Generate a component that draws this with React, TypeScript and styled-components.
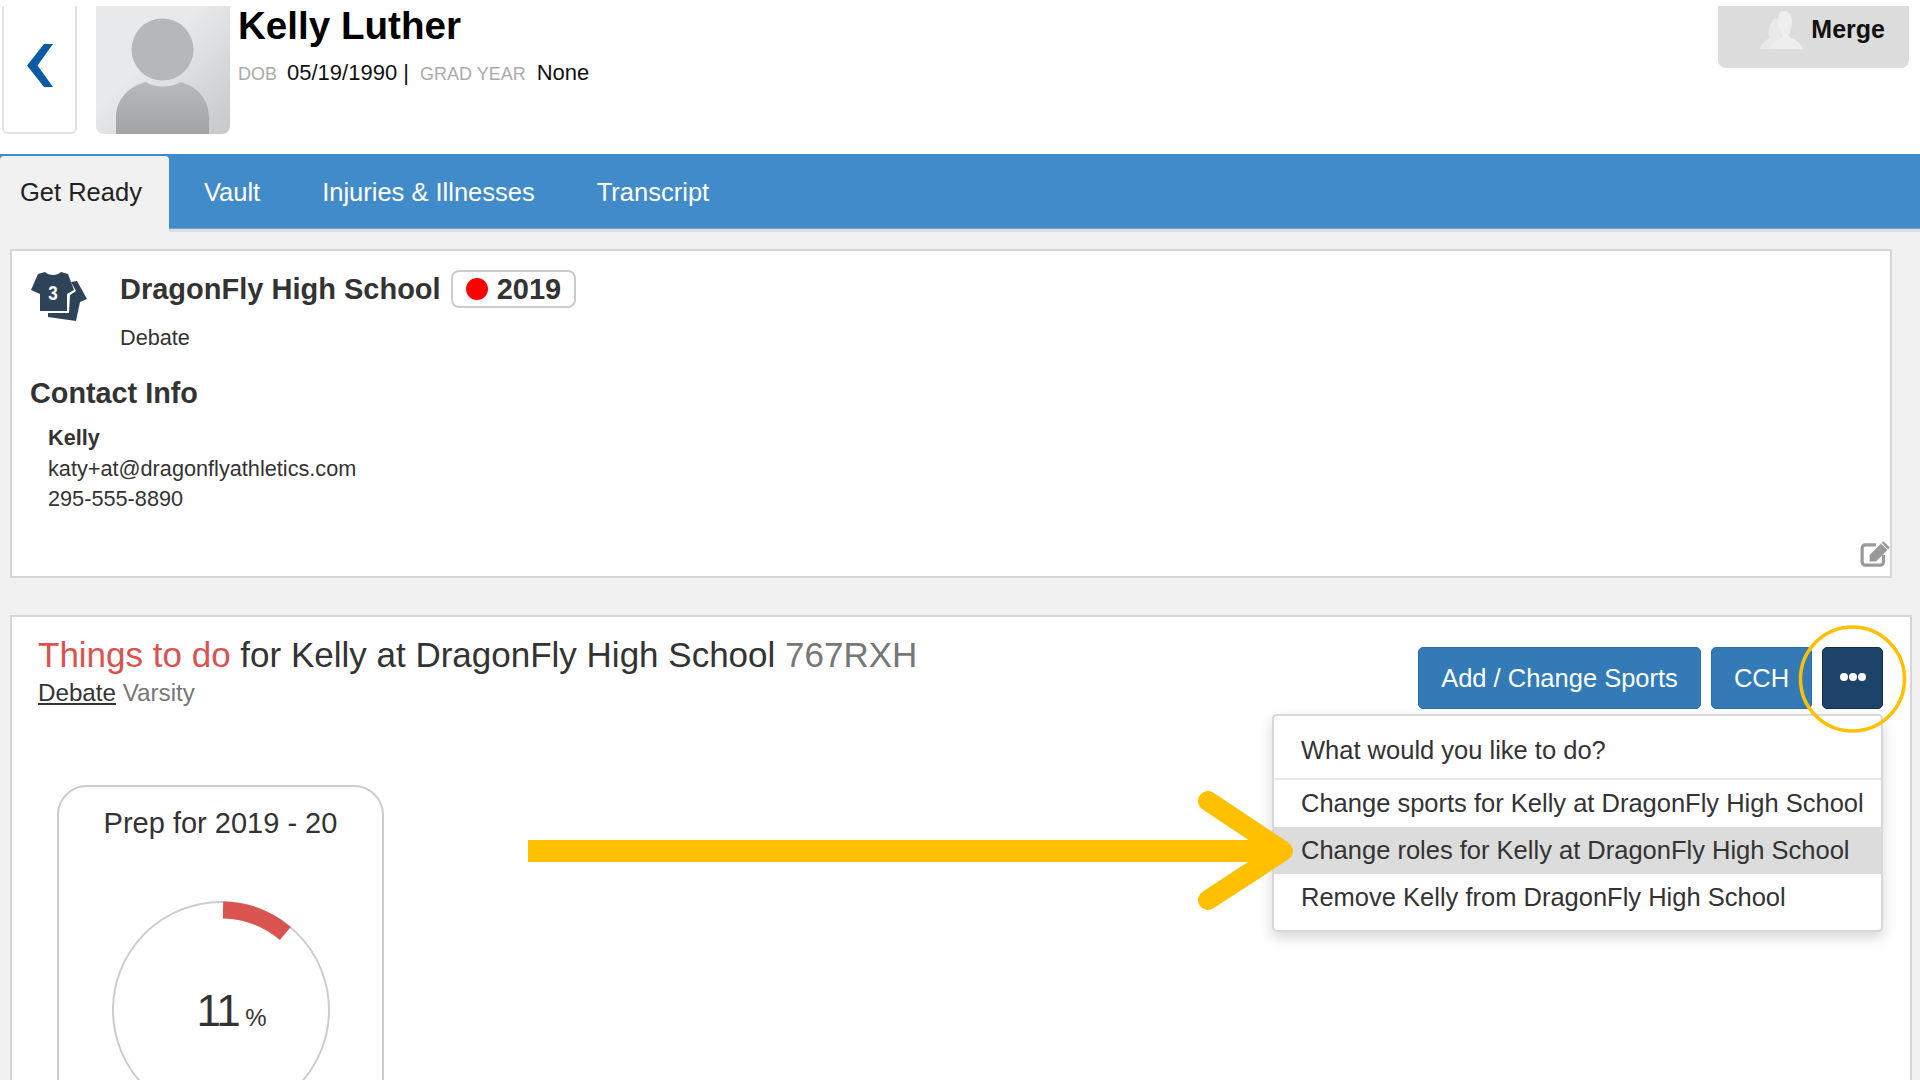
import React from 'react';
import styled, { createGlobalStyle } from 'styled-components';

const GlobalStyle = createGlobalStyle`
  html, body {
    margin: 0;
    padding: 0;
    height: 1080px;
    overflow: hidden;
    background: #f1f1f1;
    font-family: "Liberation Sans", Arial, sans-serif;
    color: #333;
  }
`;

const Page = styled.div`
  position: relative;
  width: 1920px;
  height: 1080px;
  overflow: hidden;
`;

const Header = styled.header`
  display: flex;
  height: 154px;
  padding-top: 6px;
  box-sizing: border-box;
  background: #fff;
`;

const BackButton = styled.button`
  width: 75px;
  height: 128px;
  margin-left: 2px;
  padding: 0 0 7px;
  display: flex;
  align-items: center;
  justify-content: center;
  background: #fff;
  border: 2px solid #e2e2e2;
  border-top: none;
  border-radius: 0 0 6px 6px;
`;

const Avatar = styled.div`
  width: 134px;
  height: 128px;
  margin-left: 19px;
  border-radius: 0 0 8px 8px;
  overflow: hidden;
  background: linear-gradient(135deg, #e8e9ea 40%, #c6c7c9 100%);
`;

const Identity = styled.div`
  margin-left: 8px;
  flex: 1;
`;

const Name = styled.h1`
  margin: -2px 0 0;
  font-size: 38.6px;
  line-height: 44px;
  font-weight: 700;
  color: #000;
`;

const Meta = styled.div`
  display: flex;
  align-items: baseline;
  margin-top: 12px;
  font-size: 22px;
  line-height: 26px;
  color: #111;
`;

const MetaLabel = styled.span<{ $gap: number }>`
  margin-right: ${({ $gap }) => $gap}px;
  font-size: 18px;
  color: #aaa;
`;

const MetaValue = styled.span<{ $gap?: number }>`
  margin-right: ${({ $gap }) => $gap ?? 0}px;
`;

const MergeButton = styled.button`
  width: 191px;
  height: 62px;
  margin-right: 11px;
  padding: 0 24px 15px 0;
  display: flex;
  align-items: center;
  justify-content: flex-end;
  gap: 8px;
  border: none;
  border-radius: 0 0 8px 8px;
  background: #dcdcdc;
  font-family: inherit;
  font-size: 25px;
  font-weight: 700;
  color: #111;
`;

const TabBar = styled.nav`
  display: flex;
  height: 75px;
  box-sizing: border-box;
  padding-top: 2px;
  background: #428bca;
  border-bottom: 1px solid #6ea6d6;
  box-shadow: 0 3px 0 #dedede;
`;

const Tab = styled.a<{ $active?: boolean }>`
  display: flex;
  align-items: center;
  height: ${({ $active }) => ($active ? 76 : 72)}px;
  box-sizing: border-box;
  padding: ${({ $active }) => ($active ? '0 27px 4px 20px' : '0 31px')};
  margin-right: ${({ $active }) => ($active ? 4 : 0)}px;
  border-radius: 4px 4px 0 0;
  background: ${({ $active }) => ($active ? '#f1f1f1' : 'transparent')};
  color: ${({ $active }) => ($active ? '#222' : '#fff')};
  font-size: 25.5px;
`;

const Panel = styled.section<{ $right: number; $top: number }>`
  position: relative;
  margin: ${({ $top }) => $top}px ${({ $right }) => $right}px 0 10px;
  background: #fff;
  border: 2px solid #d6d6d6;
`;

const ContactPanel = styled(Panel)`
  height: 329px;
  box-sizing: border-box;
  padding: 19px 18px;
`;

const SchoolRow = styled.div`
  display: flex;
  gap: 32px;
`;

const JerseySlot = styled.span`
  display: flex;
  margin-top: 1px;
`;

const SchoolTitle = styled.div`
  display: flex;
  align-items: center;
  gap: 10px;
  font-size: 29px;
  font-weight: 700;
  color: #333;
`;

const YearBadge = styled.span`
  display: flex;
  align-items: center;
  gap: 9px;
  height: 38px;
  box-sizing: border-box;
  padding: 0 13px;
  border: 2px solid #ccc;
  border-radius: 8px;
`;

const Dot = styled.span`
  width: 22px;
  height: 22px;
  border-radius: 50%;
  background: #f00;
`;

const SchoolSport = styled.div`
  margin-top: 17px;
  font-size: 21.7px;
  line-height: 26px;
`;

const ContactTitle = styled.h2`
  margin: 26px 0 14px;
  font-size: 28.8px;
  line-height: 32px;
  font-weight: 700;
  color: #333;
`;

const ContactLines = styled.div`
  padding-left: 18px;
  font-size: 21.7px;
  line-height: 30.5px;
`;

const ContactName = styled.div`
  font-weight: 700;
`;

const EditIconSlot = styled.span`
  position: absolute;
  right: -2px;
  bottom: 6px;
  display: flex;
`;

const TodoPanel = styled(Panel)`
  height: 500px;
  box-sizing: border-box;
  padding: 18px 0 0 26px;
`;

const TodoHeader = styled.div`
  display: flex;
  justify-content: space-between;
  padding-right: 27px;
`;

const TodoTitle = styled.div`
  font-size: 35px;
  line-height: 40px;
  color: #333;
`;

const Accent = styled.span`
  color: #d9534f;
`;

const Muted = styled.span`
  color: #777;
`;

const TodoSub = styled.div`
  margin-top: 4px;
  font-size: 24.2px;
  line-height: 28px;
  color: #777;
`;

const SportLink = styled.a`
  color: #333;
  text-decoration: underline;
`;

const Actions = styled.div`
  display: flex;
  gap: 10px;
  margin-top: 12px;
`;

const ActionButton = styled.button<{ $dark?: boolean; $width: number }>`
  width: ${({ $width }) => $width}px;
  height: 62px;
  padding: 0;
  display: flex;
  align-items: center;
  justify-content: center;
  gap: 1px;
  border: 1px solid ${({ $dark }) => ($dark ? '#14304d' : '#2e6da4')};
  border-radius: 5px;
  background: ${({ $dark }) => ($dark ? '#1c4469' : '#337ab7')};
  color: #fff;
  font-family: inherit;
  font-size: 25.5px;
`;

const Bullet = styled.span`
  width: 8px;
  height: 8px;
  border-radius: 50%;
  background: #fff;
  margin-top: -3px;
`;

const Menu = styled.div`
  position: absolute;
  top: 97px;
  left: 1260px;
  width: 611px;
  box-sizing: border-box;
  padding: 7px 0 9px;
  background: #fff;
  border: 2px solid #d8d8d8;
  border-radius: 5px;
  box-shadow: 0 6px 14px rgba(0, 0, 0, 0.16);
  font-size: 25.5px;
  color: #333;
  white-space: nowrap;
`;

const MenuHeading = styled.div`
  padding-left: 27px;
  height: 55px;
  line-height: 55px;
  border-bottom: 2px solid #e8e8e8;
`;

const MenuItem = styled.div<{ $active?: boolean }>`
  height: 47px;
  line-height: 47px;
  padding-left: 27px;
  background: ${({ $active }) => ($active ? '#dcdcdc' : 'transparent')};
`;

const PrepCard = styled.div`
  width: 327px;
  height: 400px;
  box-sizing: border-box;
  margin: 76px 0 0 19px;
  border: 2px solid #ccc;
  border-radius: 30px;
  text-align: center;
`;

const PrepTitle = styled.div`
  margin-top: 20px;
  font-size: 29px;
  line-height: 32px;
  color: #333;
`;

const Gauge = styled.div`
  position: relative;
  width: 220px;
  height: 220px;
  margin: 61px auto 0;
`;

const GaugeValue = styled.div`
  position: absolute;
  top: 85px;
  left: 0;
  right: 0;
  padding-left: 22px;
  font-size: 44px;
  line-height: 52px;
  letter-spacing: -1.5px;
  color: #333;
`;

const GaugeUnit = styled.span`
  margin-left: 6px;
  font-size: 24px;
  letter-spacing: 0;
`;

const Annotation = styled.svg`
  position: absolute;
  top: 0;
  left: 0;
  pointer-events: none;
`;

const ChevronIcon = () => (
  <svg width="26" height="43" viewBox="0 0 26 43">
    <path d="M17 0 H26 L10.5 21.5 L26 43 H17 L0 21.5 Z" fill="#0a5aa5" />
  </svg>
);

const AvatarIcon = () => (
  <svg width="134" height="128" viewBox="0 0 134 128">
    <defs>
      <linearGradient id="avatarBody" x1="0" y1="0" x2="0" y2="1">
        <stop offset="0" stopColor="#b8b9bc" />
        <stop offset="1" stopColor="#a2a3a5" />
      </linearGradient>
    </defs>
    <ellipse cx="66.5" cy="43.5" rx="31" ry="31" fill="#b6b7ba" />
    <path d="M20 128 V112 C20 92 34 80 50 76 C58 82 76 82 84 76 C100 80 113 92 113 112 V128 Z" fill="url(#avatarBody)" />
  </svg>
);

const MergeIcon = () => (
  <svg width="43" height="38" viewBox="0 0 50 44">
    <path d="M14 13 C14 8 22 7 23 13 V26 L25 32 L17 44 H0 C2 36 8 34 11 31 C9 26 10 18 14 13 Z" fill="#e9e9e9" />
    <path d="M27 0 C35 0 38 7 37 15 C36 22 35 26 33 29 C38 33 47 35 50 44 H11 C14 35 22 33 26 29 C23 25 21 20 21 12 C21 4 23 0 27 0 Z" fill="#eeeeee" />
  </svg>
);

const JerseyIcon = () => (
  <svg width="58" height="52" viewBox="0 0 58 52">
    <path d="M41 11 L47 10 L57 28 L50 31 L46 50 L18 46 L18 42 L39 42 L40 24 L46 20 Z" fill="#2f4358" />
    <path d="M15 1 C19 5 27 5 31 1 L38 3 L44 19 L37 23 L37 40 H10 L10 23 L1 19 L8 3 Z" fill="#2f4358" />
    <text x="27" y="29" transform="scale(0.85 1)" textAnchor="middle" fontFamily="Liberation Sans, sans-serif" fontWeight="700" fontSize="20" fill="#fff">3</text>
  </svg>
);

const EditIcon = () => (
  <svg width="32" height="32" viewBox="0 0 30 30">
    <path d="M15 6.5 H5 a3 3 0 0 0 -3 3 V22.5 a3 3 0 0 0 3 3 H19 a3 3 0 0 0 3 -3 V16" fill="none" stroke="#999" strokeWidth="3" />
    <path d="M9 16 L22 3 L28 9 L15 22 H9 Z" fill="#999" />
    <path d="M20 5 L26 11" stroke="#fff" strokeWidth="1" />
  </svg>
);

const GaugeRing = () => (
  <svg width="220" height="220" viewBox="0 0 220 220">
    <circle cx="110" cy="110" r="108" fill="none" stroke="#ccc" strokeWidth="2" />
    <path d="M112 10 A100 100 0 0 1 174.3 33.4" fill="none" stroke="#d9534f" strokeWidth="17" />
  </svg>
);

export default function App() {
  return (
    <Page>
      <GlobalStyle />
      <Header>
        <BackButton>
          <ChevronIcon />
        </BackButton>
        <Avatar>
          <AvatarIcon />
        </Avatar>
        <Identity>
          <Name>Kelly Luther</Name>
          <Meta>
            <MetaLabel $gap={10}>DOB</MetaLabel>
            <MetaValue $gap={11}>05/19/1990 |</MetaValue>
            <MetaLabel $gap={11}>GRAD YEAR</MetaLabel>
            <MetaValue>None</MetaValue>
          </Meta>
        </Identity>
        <MergeButton>
          <MergeIcon />
          Merge
        </MergeButton>
      </Header>
      <TabBar>
        <Tab $active>Get Ready</Tab>
        <Tab>Vault</Tab>
        <Tab>Injuries &amp; Illnesses</Tab>
        <Tab>Transcript</Tab>
      </TabBar>
      <ContactPanel $top={20} $right={28}>
        <SchoolRow>
          <JerseySlot>
            <JerseyIcon />
          </JerseySlot>
          <div>
            <SchoolTitle>
              DragonFly High School
              <YearBadge>
                <Dot />
                2019
              </YearBadge>
            </SchoolTitle>
            <SchoolSport>Debate</SchoolSport>
          </div>
        </SchoolRow>
        <ContactTitle>Contact Info</ContactTitle>
        <ContactLines>
          <ContactName>Kelly</ContactName>
          <div>katy+at@dragonflyathletics.com</div>
          <div>295-555-8890</div>
        </ContactLines>
        <EditIconSlot>
          <EditIcon />
        </EditIconSlot>
      </ContactPanel>
      <TodoPanel $top={37} $right={8}>
        <TodoHeader>
          <div>
            <TodoTitle>
              <Accent>Things to do</Accent> for Kelly at DragonFly High School <Muted>767RXH</Muted>
            </TodoTitle>
            <TodoSub>
              <SportLink>Debate</SportLink> Varsity
            </TodoSub>
          </div>
          <Actions>
            <ActionButton $width={283}>Add / Change Sports</ActionButton>
            <ActionButton $width={101}>CCH</ActionButton>
            <ActionButton $dark $width={61}>
              <Bullet />
              <Bullet />
              <Bullet />
            </ActionButton>
          </Actions>
        </TodoHeader>
        <Menu>
          <MenuHeading>What would you like to do?</MenuHeading>
          <MenuItem>Change sports for Kelly at DragonFly High School</MenuItem>
          <MenuItem $active>Change roles for Kelly at DragonFly High School</MenuItem>
          <MenuItem>Remove Kelly from DragonFly High School</MenuItem>
        </Menu>
        <PrepCard>
          <PrepTitle>Prep for 2019 - 20</PrepTitle>
          <Gauge>
            <GaugeRing />
            <GaugeValue>
              11<GaugeUnit>%</GaugeUnit>
            </GaugeValue>
          </Gauge>
        </PrepCard>
      </TodoPanel>
      <Annotation width="1920" height="1080" viewBox="0 0 1920 1080">
        <rect x="528" y="840" width="745" height="22" fill="#ffc000" />
        <path d="M1208 801 L1283 851 L1208 900" fill="none" stroke="#ffc000" strokeWidth="20" strokeLinecap="round" strokeLinejoin="round" />
        <circle cx="1852.5" cy="679" r="52" fill="none" stroke="#ffc000" strokeWidth="3.5" />
      </Annotation>
    </Page>
  );
}
